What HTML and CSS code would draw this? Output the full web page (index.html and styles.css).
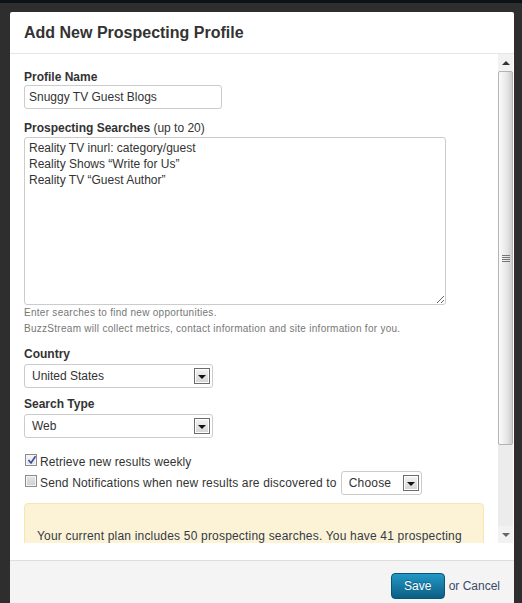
FILE: index.html
```html
<!DOCTYPE html>
<html lang="en">
<head>
    <meta charset="UTF-8">
    <title>Add New Prospecting Profile</title>
    <link rel="stylesheet" href="styles.css">
</head>
<body>
    <div class="page">
        <div class="modal">
            <div class="modal-header">
                <h1>Add New Prospecting Profile</h1>
            </div>

            <div class="modal-body">
                <div class="scroll-area">
                    <div class="field first">
                        <label>Profile Name</label>
                        <input type="text" class="text-input" value="Snuggy TV Guest Blogs">
                    </div>

                    <div class="field searches">
                        <label>Prospecting Searches <span class="light">(up to 20)</span></label>
                        <textarea class="searches-box">Reality TV inurl: category/guest
Reality Shows “Write for Us”
Reality TV “Guest Author”</textarea>
                        <p class="help">Enter searches to find new opportunities.<br>BuzzStream will collect metrics, contact information and site information for you.</p>
                    </div>

                    <div class="field country">
                        <label>Country</label>
                        <div class="select wide"><span>United States</span><span class="arrow"></span></div>
                    </div>

                    <div class="field type">
                        <label>Search Type</label>
                        <div class="select wide"><span>Web</span><span class="arrow"></span></div>
                    </div>

                    <div class="check-row first-check">
                        <span class="checkbox checked"><svg width="10" height="10" viewBox="0 0 10 10"><path d="M1.5 5 L4 8 L8.5 1.2" fill="none" stroke="#3a4c9c" stroke-width="1.6"/></svg></span>Retrieve new results weekly
                    </div>
                    <div class="check-row second-check">
                        <span class="check-label"><span class="checkbox"></span>Send Notifications when new results are discovered to</span>
                        <div class="select small"><span>Choose</span><span class="arrow"></span></div>
                    </div>

                    <div class="notice">
                        Your current plan includes 50 prospecting searches. You have 41 prospecting searches remaining.
                    </div>
                </div>

                <div class="scrollbar">
                    <div class="sb-up"><span></span></div>
                    <div class="sb-thumb"><span class="grip"></span></div>
                    <div class="sb-track"></div>
                    <div class="sb-down"><span></span></div>
                </div>
            </div>

            <div class="modal-footer">
                <button class="save">Save</button>
                <span class="cancel">or Cancel</span>
            </div>
        </div>
    </div>
</body>
</html>
```

FILE: styles.css
```css
body {
    margin: 0;
    background: #2e2e2e;
    font-family: "Liberation Sans", Arial, sans-serif;
    color: #333;
    overflow: hidden;
}
.page {
    border-top: 3px solid #0b1218;
    padding: 9px 0 0 10px;
}
.modal {
    width: 504px;
    background: #fff;
    border-radius: 2px 2px 0 0;
}
.modal-header {
    padding: 11px 14px 10px;
    border-bottom: 1px solid #e5e5e5;
}
.modal-header h1 {
    margin: 0;
    font-size: 16px;
    line-height: 20px;
    font-weight: bold;
    color: #333;
}
.modal-body {
    display: flex;
    padding-bottom: 17px;
}
.scroll-area {
    width: 488px;
    height: 489px;
    box-sizing: border-box;
    padding: 15px 14px 0;
    overflow: hidden;
}
.field label {
    display: block;
    font-size: 12px;
    line-height: 16px;
    font-weight: bold;
}
.field label .light {
    font-weight: normal;
}
.searches {
    margin-top: 11px;
}
.country {
    margin-top: 9px;
}
.type {
    margin-top: 8px;
}
.text-input {
    display: block;
    width: 198px;
    height: 24px;
    box-sizing: border-box;
    margin: 0;
    padding: 0 4px;
    border: 1px solid #ccc;
    border-radius: 3px;
    font-family: inherit;
    font-size: 12px;
    color: #333;
}
.searches-box {
    display: block;
    width: 422px;
    height: 168px;
    box-sizing: border-box;
    margin: 1px 0 0;
    padding: 2px 4px;
    border: 1px solid #ccc;
    border-radius: 3px;
    font-family: inherit;
    font-size: 12px;
    line-height: 16px;
    color: #333;
}
.help {
    margin: 0;
    font-size: 10px;
    line-height: 16px;
    letter-spacing: 0.28px;
    color: #777;
}
.select {
    display: flex;
    align-items: center;
    justify-content: space-between;
    height: 24px;
    box-sizing: border-box;
    border: 1px solid #ccc;
    border-radius: 3px;
    padding: 0 2px 0 7px;
    font-size: 12px;
    color: #333;
    background: #fff;
}
.select.wide {
    width: 189px;
    margin-top: 2px;
}
.select.small {
    width: 81px;
    margin-left: 4px;
    letter-spacing: 0.2px;
}
.arrow {
    width: 16px;
    height: 16px;
    box-sizing: border-box;
    border: 1px solid #6c6c6c;
    box-shadow: inset 0 0 0 1px #fff;
    background: linear-gradient(#f4f4f4, #d4d4d4);
    display: flex;
    align-items: center;
    justify-content: center;
    padding-top: 2px;
}
.arrow::after {
    content: "";
    border-left: 4px solid transparent;
    border-right: 4px solid transparent;
    border-top: 4px solid #111;
}
.check-row {
    font-size: 12px;
    line-height: 16px;
    letter-spacing: 0.1px;
}
.first-check {
    margin-top: 16px;
}
.second-check {
    margin-top: 1px;
    display: flex;
    align-items: center;
    letter-spacing: 0.16px;
}
.checkbox {
    display: inline-block;
    width: 12px;
    height: 12px;
    box-sizing: border-box;
    border: 1px solid #8c8c8c;
    background: linear-gradient(#e6e6e6, #cfcfcf);
    box-shadow: inset 0 0 0 1px #f4f4f4;
    margin: 0 3px 0 1px;
    position: relative;
}
.checkbox.checked {
    background: linear-gradient(#f6f6f6, #e2e2e2);
}
.checkbox svg {
    position: absolute;
    left: 1px;
    top: 0;
}
.notice {
    margin-top: 8px;
    width: 460px;
    box-sizing: border-box;
    padding: 23px 12px 14px;
    background: #fcf3d6;
    border: 1px solid #f7e6b3;
    border-radius: 4px;
    font-size: 12px;
    line-height: 18px;
    letter-spacing: 0.19px;
    color: #343a48;
}
.scrollbar {
    width: 15px;
    height: 489px;
    display: flex;
    flex-direction: column;
    background: #ececec;
}
.sb-up, .sb-down {
    height: 17px;
    display: flex;
    align-items: center;
    justify-content: center;
    background: #f2f2f2;
}
.sb-up span {
    border-left: 4px solid transparent;
    border-right: 4px solid transparent;
    border-bottom: 4px solid #333;
}
.sb-down span {
    border-left: 4px solid transparent;
    border-right: 4px solid transparent;
    border-top: 4px solid #666;
}
.sb-thumb {
    height: 374px;
    box-sizing: border-box;
    border: 1px solid #b3b3b3;
    border-radius: 2px;
    background: linear-gradient(to right, #fbfbfb, #e6e6e6 60%, #cdcdcd);
    display: flex;
    align-items: center;
    justify-content: center;
}
.grip {
    width: 8px;
    height: 7px;
    background: repeating-linear-gradient(#777 0 1px, transparent 1px 2px);
}
.sb-track {
    flex: 1;
}
.modal-footer {
    height: 50px;
    border-top: 1px solid #dedede;
    background: #f4f4f4;
    padding: 12px 14px 0 0;
    box-sizing: border-box;
    display: flex;
    justify-content: flex-end;
    align-items: flex-start;
}
.save {
    width: 54px;
    height: 26px;
    margin: 0;
    border: 1px solid #0b5476;
    border-radius: 4px;
    background: linear-gradient(#2198c6, #0c5e84);
    color: #fff;
    font-family: inherit;
    font-size: 12px;
    text-shadow: 0 -1px 0 rgba(0, 0, 0, 0.3);
}
.cancel {
    margin-left: 4px;
    font-size: 12px;
    line-height: 26px;
    color: #3b4a68;
}
```
